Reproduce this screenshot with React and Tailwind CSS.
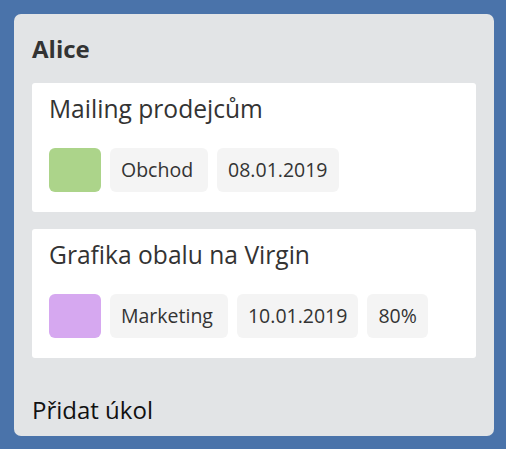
const tasks = [
  {
    title: 'Mailing prodejcům',
    color: 'bg-[#acd48a]',
    category: 'Obchod',
    tags: ['08.01.2019'],
  },
  {
    title: 'Grafika obalu na Virgin',
    color: 'bg-[#d6a8f0]',
    category: 'Marketing',
    tags: ['10.01.2019', '80%'],
  },
];

const TaskCard = ({ task }) => (
  <div className="bg-white rounded-[3px] px-[17px] pt-[8px] pb-[20px]">
    <h3 className="text-[24.6px] leading-[36px] text-[#333]">{task.title}</h3>
    <div className="flex gap-[9px] mt-[21px]">
      <div className={`w-[52px] h-[44px] rounded-[6px] ${task.color}`}></div>
      <span className="h-[44px] pl-[11px] pr-[15px] flex items-center bg-[#f4f4f4] rounded-[6px] text-[19.5px] text-[#333]">
        {task.category}
      </span>
      {task.tags.map((tag) => (
        <span
          key={tag}
          className="h-[44px] px-[11px] flex items-center bg-[#f4f4f4] rounded-[6px] text-[19.5px] text-[#333]"
        >
          {tag}
        </span>
      ))}
    </div>
  </div>
);

export default function App() {
  return (
    <div
      className="w-[506px] h-[449px] bg-[#4a73aa] pt-[14px] px-[14px]"
      style={{ fontFamily: '"Open Sans", sans-serif' }}
    >
      <div className="w-[480px] bg-[#e2e4e6] rounded-[7px] px-[18px] pt-[17px] pb-[8px]">
        <h2 className="text-[24px] leading-[36px] font-bold text-[#333]">Alice</h2>
        <div className="flex flex-col gap-[17px] mt-[16px]">
          {tasks.map((t) => (
            <TaskCard key={t.title} task={t} />
          ))}
        </div>
        <div className="mt-[34px] text-[24px] leading-[36px] text-[#111]">Přidat úkol</div>
      </div>
    </div>
  );
}
